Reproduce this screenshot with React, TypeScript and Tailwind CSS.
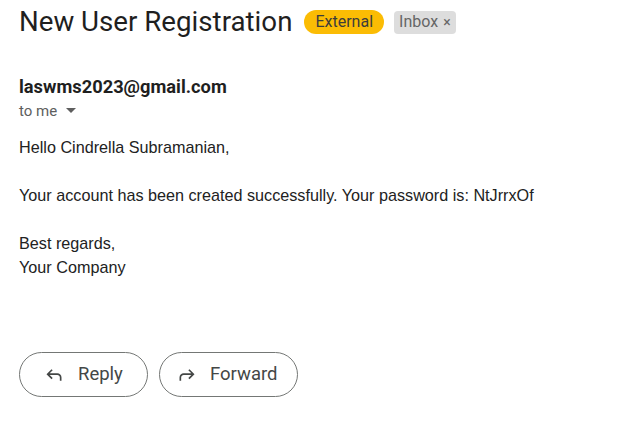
import React from "react";

function ReplyIcon() {
  return (
    <svg width="20" height="20" viewBox="0 0 24 24" fill="#444746">
      <path d="M19 19v-4c0-.83-.29-1.54-.88-2.12A2.890 2.890 0 0 0 16 12H6.83l3.6 3.6L9 17l-6-6 6-6 1.43 1.4-3.6 3.6H16c1.38 0 2.56.49 3.54 1.46C20.51 12.440 21 13.620 21 15v4h-2z" />
    </svg>
  );
}

function ForwardIcon() {
  return (
    <svg width="20" height="20" viewBox="0 0 24 24" fill="#444746">
      <path d="M3 19v-4c0-1.38.49-2.560 1.46-3.54C5.440 10.490 6.620 10 8 10h9.17l-3.6-3.6L15 5l6 6-6 6-1.43-1.4 3.600-3.6H8c-.83 0-1.54.29-2.12.88A2.890 2.890 0 0 0 5 15v4H3z" />
    </svg>
  );
}

export default function App() {
  return (
    <div className="w-[633px] h-[444px] bg-white pl-[19px] pt-[5px]" style={{ fontFamily: "Roboto, Arial, sans-serif" }}>
      <div className="flex items-center">
        <h1 className="text-[27.7px] leading-[34px] text-[#1f1f1f] font-normal" style={{ fontFamily: "Roboto, sans-serif" }}>
          New User Registration
        </h1>
        <span className="ml-[12px] h-[24px] px-[11px] rounded-full bg-[#fbbc04] text-[#3c3c3c] text-[16px] flex items-center">
          External
        </span>
        <span className="ml-[10px] h-[23px] px-[5px] rounded-[4px] bg-[#dddddd] text-[#666666] text-[16px] flex items-center gap-[5px]">
          Inbox <span className="text-[14px]">×</span>
        </span>
      </div>
      <div className="mt-[37px] text-[18.3px] leading-[22px] font-bold text-[#1f1f1f]">laswms2023@gmail.com</div>
      <div className="mt-[3px] flex items-center text-[15px] leading-[20px] text-[#5e5e5e]">
        to me
        <svg className="ml-[9px]" width="10" height="6" viewBox="0 0 10 6">
          <path d="M0 0h10L5 5z" fill="#5e5e5e" />
        </svg>
      </div>
      <div className="mt-[14px] text-[16.2px] leading-[24px] text-[#222222]" style={{ fontFamily: "'Liberation Sans', Arial, sans-serif" }}>
        <p>Hello Cindrella Subramanian,</p>
        <p className="mt-[24px]">Your account has been created successfully. Your password is: NtJrrxOf</p>
        <p className="mt-[24px]">Best regards,</p>
        <p>Your Company</p>
      </div>
      <div className="mt-[73px] flex gap-[11px]">
        <button className="h-[45px] w-[129px] rounded-full border border-[#747775] flex items-center pl-[24px] gap-[14px] text-[18.5px] text-[#444746]">
          <ReplyIcon />
          Reply
        </button>
        <button className="h-[45px] w-[139px] rounded-full border border-[#747775] flex items-center pl-[17px] gap-[13px] text-[18.5px] text-[#444746]">
          <ForwardIcon />
          Forward
        </button>
      </div>
    </div>
  );
}
